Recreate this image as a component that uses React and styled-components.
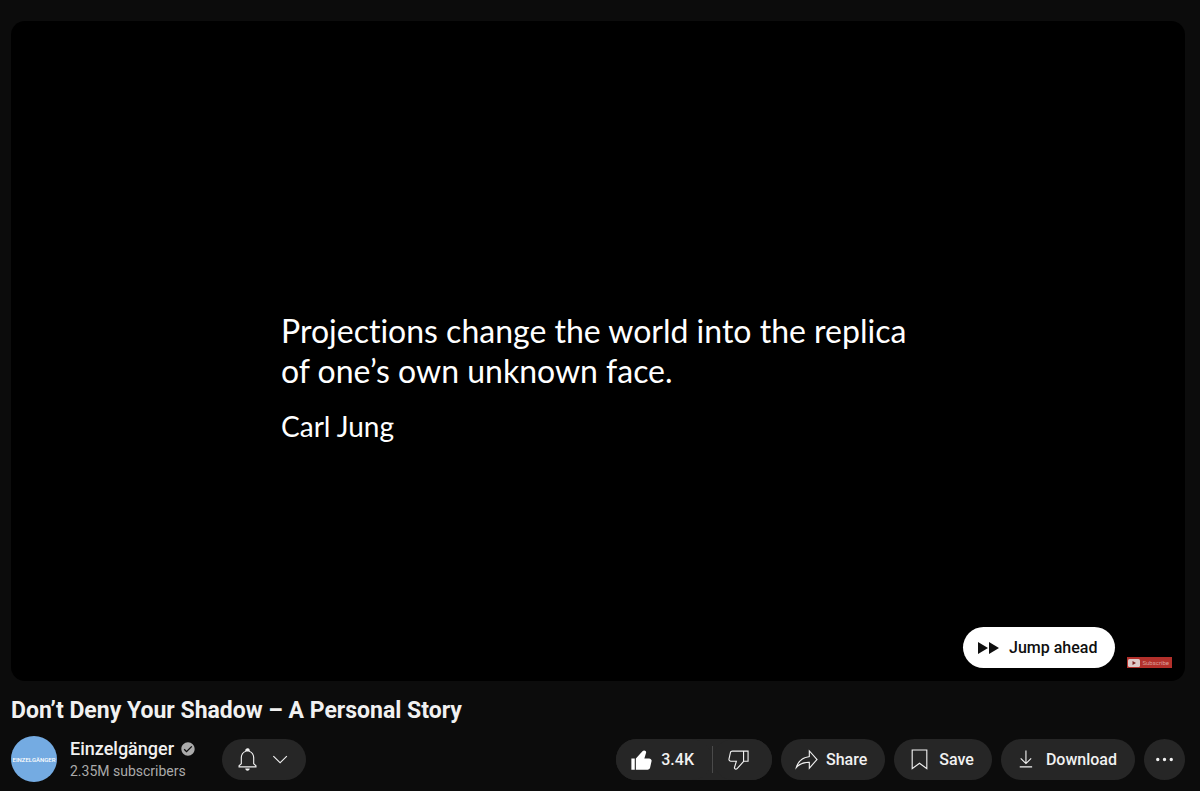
import React from "react";
import styled, { createGlobalStyle } from "styled-components";

const GlobalStyle = createGlobalStyle`
  * {
    box-sizing: border-box;
  }

  body {
    margin: 0;
    background-color: #0c0c0c;
    color: #f1f1f1;
    font-family: Roboto, "Liberation Sans", sans-serif;
  }

  button {
    border: 0;
    margin: 0;
    font-family: inherit;
    cursor: pointer;
  }
`;

const Page = styled.main`
  padding: 21px 15px 8px 11px;
`;

const Player = styled.section`
  position: relative;
  display: flex;
  flex-direction: column;
  justify-content: center;
  aspect-ratio: 16 / 9;
  padding: 54px 0 0 23%;
  border-radius: 14px;
  background-color: #000000;
  overflow: hidden;
`;

const Quote = styled.blockquote`
  margin: 0;
  color: #ffffff;
  font-family: Lato, "Open Sans", sans-serif;
  font-size: 32px;
  font-variant-ligatures: none;
  line-height: 40px;
`;

const Author = styled.footer`
  margin-top: 15px;
  font-size: 28px;
`;

const PlayerOverlay = styled.div`
  position: absolute;
  right: 13px;
  bottom: 13px;
  display: flex;
  align-items: flex-end;
  gap: 12px;
`;

const JumpAhead = styled.button`
  display: flex;
  align-items: center;
  gap: 10px;
  height: 41px;
  padding: 0 18px 0 14px;
  border-radius: 21px;
  background-color: #ffffff;
  color: #0f0f0f;
  font-size: 16px;
  font-weight: 500;
`;

const Watermark = styled.button`
  display: flex;
  align-items: center;
  gap: 2px;
  height: 11px;
  padding: 0 3px 0 1px;
  background-color: #b3302b;
  color: #d9a19e;
  font-size: 6px;
`;

const Title = styled.h1`
  margin: 16px 0 11px;
  font-size: 23px;
  font-weight: 700;
  line-height: 28px;
`;

const Row = styled.div`
  display: flex;
  align-items: center;
  justify-content: space-between;
`;

const Owner = styled.div`
  display: flex;
  align-items: center;
`;

const Avatar = styled.a`
  display: flex;
  align-items: center;
  justify-content: center;
  width: 46px;
  height: 46px;
  margin-right: 13px;
  border-radius: 50%;
  background-color: #74abe2;
  color: #ffffff;
  font-size: 6px;
  font-weight: 500;
  text-decoration: none;
`;

const ChannelInfo = styled.div`
  margin-right: 26px;
`;

const ChannelName = styled.a`
  display: flex;
  align-items: center;
  gap: 6px;
  color: #f1f1f1;
  font-size: 18px;
  font-weight: 500;
  line-height: 24px;
  text-decoration: none;
`;

const Subscribers = styled.div`
  color: #aaaaaa;
  font-size: 14px;
  line-height: 20px;
`;

const Actions = styled.div`
  display: flex;
  gap: 9px;
`;

const Pill = styled.button`
  display: flex;
  align-items: center;
  gap: 6px;
  height: 41px;
  padding: ${props => (props.$iconOnly ? "0 12px" : "0 18px 0 12px")};
  border-radius: 21px;
  background-color: #262626;
  color: #f1f1f1;
  font-size: 16px;
  font-weight: 500;
`;

const DislikePill = styled(Pill)`
  padding: 0 20px 0 12px;
`;

const Round = styled(Pill)`
  justify-content: center;
  width: 41px;
  padding: 0;
`;

const Split = styled.div`
  display: flex;
  align-items: center;
  border-radius: 21px;
  background-color: #262626;
`;

const Divider = styled.span`
  width: 1px;
  height: 27px;
  background-color: #4a4a4a;
`;

const Svg = styled.svg`
  display: block;
  flex: none;
  fill: currentColor;
`;

const paths = {
  like:
    "M3 11h3v10H3V11zM18.77 11h-4.23l1.52-4.94C16.38 5.03 15.54 4 14.38 4c-.58 0-1.14.24-1.52.65L7 11v10h10.43c1.06 0 1.98-.67 2.19-1.61l1.34-6C21.23 12.15 20.18 11 18.77 11z",
  dislike:
    "M17 4h-1H6.57C5.5 4 4.59 4.67 4.38 5.61l-1.34 6C2.77 12.85 3.82 14 5.23 14h4.23l-1.52 4.94C7.62 19.97 8.46 21 9.62 21c.58 0 1.14-.24 1.52-.65L17 14h4V4h-4zM10.4 19.67c-.19.21-.48.33-.78.33-.26 0-.5-.11-.63-.3-.07-.1-.15-.26-.09-.47l1.52-4.94.4-1.29H5.23c-.41 0-.8-.17-1.03-.46-.12-.15-.25-.4-.18-.72l1.34-6C5.46 5.35 5.97 5 6.57 5H16v8.61l-5.6 6.06zM20 13h-3V5h3v8z",
  share:
    "M15 5.63L20.66 12 15 18.37V14h-1c-3.96 0-7.14 1-9.75 3.09 1.84-4.07 5.11-6.4 9.89-7.1L15 9.86V5.63M14 3v6C6.22 10.13 3.11 15.33 2 21c2.78-3.97 6.44-6 12-6v6l8-9-8-9z",
  save:
    "M18 4v15.06l-5.42-3.87-.58-.42-.58.42L6 19.06V4h12m1-1H5v18l7-5 7 5V3z",
  download:
    "M17 18v1H6v-1h11zm-.5-6.6-.7-.7-3.8 3.7V4h-1v10.4l-3.8-3.8-.7.7 5 5 5-4.9z",
  bell:
    "M10 20h4c0 1.1-.9 2-2 2s-2-.9-2-2zm10-2.65V19H4v-1.65l2-1.88v-5.15C6 7.4 7.56 5.1 10 4.34v-.38c0-1.42 1.49-2.5 2.99-1.76.65.32 1.01 1.03 1.01 1.76v.39c2.44.75 4 3.06 4 5.98v5.15l2 1.87zm-1 .42-2-1.88v-5.47c0-2.47-1.19-4.36-3.13-5.1-1.26-.53-2.64-.5-3.84.03C8.15 6.11 7 7.99 7 10.42v5.47l-2 1.88V18h14v-.23z",
  chevron: "m18 9.28-6.35 6.35-6.37-6.35.72-.71 5.64 5.65 5.65-5.65z",
  verified:
    "M12 2C6.5 2 2 6.5 2 12s4.5 10 10 10 10-4.5 10-10S17.5 2 12 2zM9.8 17.3l-4.2-4.1L7 11.8l2.8 2.7L17 7.4l1.4 1.4-8.6 8.5z",
  more:
    "M7.5 12a1.5 1.5 0 1 1-3 0 1.5 1.5 0 0 1 3 0zM13.5 12a1.5 1.5 0 1 1-3 0 1.5 1.5 0 0 1 3 0zM19.5 12a1.5 1.5 0 1 1-3 0 1.5 1.5 0 0 1 3 0z"
};

const Icon = ({ name, size = 27, color }) => (
  <Svg viewBox="0 0 24 24" width={size} height={size} color={color} aria-hidden="true">
    <path d={paths[name]} />
  </Svg>
);

const App = () => (
  <>
    <GlobalStyle />
    <Page>
      <Player>
        <Quote>
          Projections change the world into the replica
          <br />
          of one’s own unknown face.
          <Author>Carl Jung</Author>
        </Quote>
        <PlayerOverlay>
          <JumpAhead>
            <Svg viewBox="0 0 22 12" width="22" height="12" aria-hidden="true">
              <path d="M1 0L11 6L1 12zM12 0L22 6L12 12z" />
            </Svg>
            Jump ahead
          </JumpAhead>
          <Watermark>
            <Svg viewBox="0 0 12 8" width="12" height="8" aria-hidden="true">
              <rect width="12" height="8" rx="1.5" fill="#dcc9c8" />
              <path d="M4.5 2L8 4L4.5 6z" fill="#7d211e" />
            </Svg>
            Subscribe
          </Watermark>
        </PlayerOverlay>
      </Player>
      <Title>Don’t Deny Your Shadow – A Personal Story</Title>
      <Row>
        <Owner>
          <Avatar href="#channel">EINZELGÄNGER</Avatar>
          <ChannelInfo>
            <ChannelName href="#channel">
              Einzelgänger
              <Icon name="verified" size={16} color="#aaaaaa" />
            </ChannelName>
            <Subscribers>2.35M subscribers</Subscribers>
          </ChannelInfo>
          <Pill $iconOnly aria-label="Notifications">
            <Icon name="bell" />
            <Icon name="chevron" />
          </Pill>
        </Owner>
        <Actions>
          <Split>
            <Pill>
              <Icon name="like" color="#ffffff" />
              3.4K
            </Pill>
            <Divider />
            <DislikePill aria-label="Dislike">
              <Icon name="dislike" />
            </DislikePill>
          </Split>
          <Pill>
            <Icon name="share" />
            Share
          </Pill>
          <Pill>
            <Icon name="save" />
            Save
          </Pill>
          <Pill>
            <Icon name="download" />
            Download
          </Pill>
          <Round aria-label="More actions">
            <Icon name="more" />
          </Round>
        </Actions>
      </Row>
    </Page>
  </>
);

export default App;
